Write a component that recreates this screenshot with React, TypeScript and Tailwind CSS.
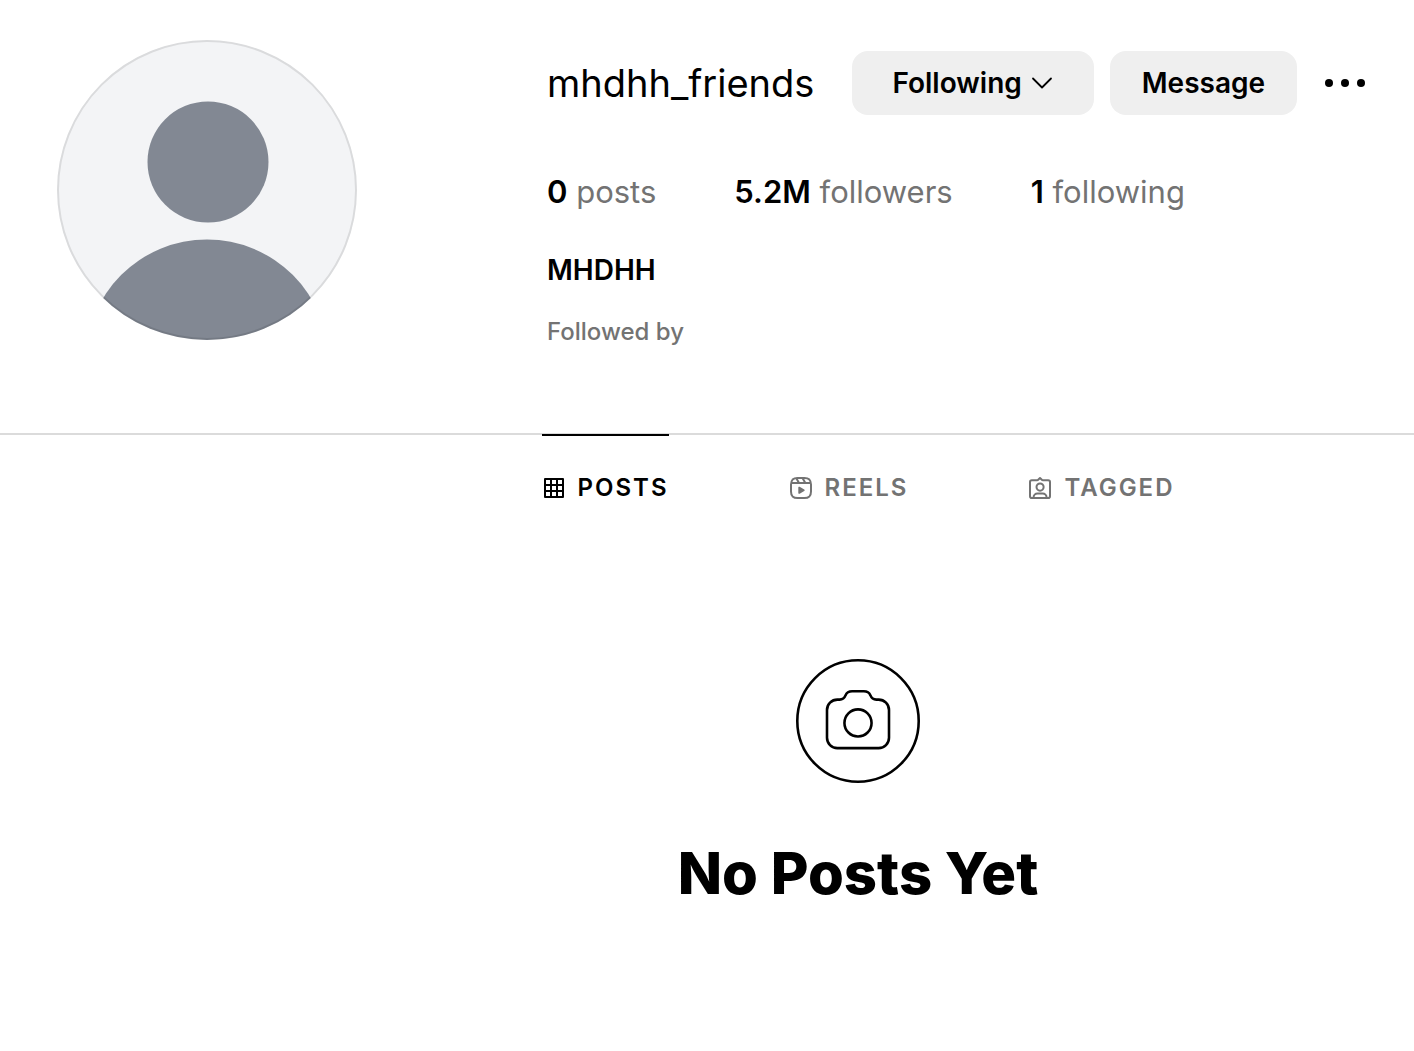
import type { ReactNode } from "react";

interface StatProps {
  value: string;
  label: string;
}

interface TabProps {
  label: string;
  icon: ReactNode;
  active?: boolean;
}

function Avatar() {
  return (
    <svg viewBox="0 0 300 300" className="size-[300px] shrink-0" role="img" aria-label="Profile picture">
      <clipPath id="avatar-clip">
        <circle cx="150" cy="150" r="150" />
      </clipPath>
      <g clipPath="url(#avatar-clip)">
        <rect width="300" height="300" fill="#f3f4f6" />
        <circle cx="151" cy="122" r="60.5" fill="#828893" />
        <circle cx="150" cy="321" r="121.5" fill="#828893" />
      </g>
      <circle cx="150" cy="150" r="149" fill="none" stroke="#000" strokeOpacity="0.1" strokeWidth="2" />
    </svg>
  );
}

function GridIcon() {
  return (
    <svg viewBox="0 0 24 24" className="size-6" fill="none" stroke="currentColor" strokeWidth="2" strokeLinejoin="round" aria-hidden="true">
      <rect x="3" y="3" width="18" height="18" />
      <path d="M9 3v18M15 3v18M3 9h18M3 15h18" />
    </svg>
  );
}

function ReelsIcon() {
  return (
    <svg viewBox="0 0 24 24" className="size-6" fill="none" stroke="currentColor" strokeWidth="2" strokeLinejoin="round" aria-hidden="true">
      <path d="M2.05 7h19.9M13.5 2l2.86 5M7.2 2.1 10 7" />
      <path
        strokeLinecap="round"
        d="M2 12v3.45c0 2.85.7 4 1.6 4.95.95.9 2.1 1.6 4.95 1.6h6.9c2.85 0 4-.7 4.95-1.6.9-.95 1.6-2.1 1.6-4.95v-6.9c0-2.85-.7-4-1.6-4.95C19.45 2.7 18.3 2 15.45 2h-6.9C5.7 2 4.55 2.7 3.6 3.6 2.7 4.55 2 5.7 2 8.55Z"
      />
      <path
        fill="currentColor"
        stroke="none"
        d="M9.76 17.66a.9.9 0 0 1-.45-.78v-5.25a.9.9 0 0 1 1.36-.79l4.55 2.63a.9.9 0 0 1 0 1.57l-4.55 2.62a.9.9 0 0 1-.91 0Z"
      />
    </svg>
  );
}

function TaggedIcon() {
  return (
    <svg viewBox="0 0 24 24" className="size-6" fill="none" stroke="currentColor" strokeWidth="2" strokeLinecap="round" strokeLinejoin="round" aria-hidden="true">
      <path d="M10.2 3.8 12 2l1.8 1.8a1.6 1.6 0 0 0 1.12.46h5.26A1.82 1.82 0 0 1 22 6.08v14.1A1.82 1.82 0 0 1 20.18 22H3.82A1.82 1.82 0 0 1 2 20.18V6.08a1.82 1.82 0 0 1 1.82-1.82h5.26a1.6 1.6 0 0 0 1.12-.46Z" />
      <path d="M18.6 22v-.6a3.95 3.95 0 0 0-3.95-3.95H9.5a3.95 3.95 0 0 0-3.95 3.95v.6" />
      <circle cx="12.07" cy="11.07" r="3.56" />
    </svg>
  );
}

function CameraIcon() {
  return (
    <svg viewBox="0 0 96 96" className="size-[124px]" fill="none" stroke="currentColor" strokeWidth="2" strokeLinejoin="round" aria-hidden="true">
      <circle cx="48" cy="48" r="47" />
      <circle cx="48" cy="49.5" r="10.5" />
      <path d="M64 69a8 8 0 0 0 8-8.03V39.46a8.02 8.02 0 0 0-8.01-8.04h-1.75a4.95 4.95 0 0 1-4.59-3.24C56.61 25.7 54.86 25 52.47 25h-8.98c-2.4 0-4.15.7-5.19 3.18a4.95 4.95 0 0 1-4.59 3.24h-1.7A8.02 8.02 0 0 0 24 39.46v21.5A8.02 8.02 0 0 0 32 69Z" />
    </svg>
  );
}

function Stat({ value, label }: StatProps) {
  return (
    <li className="text-[#737373]">
      <span className="font-semibold text-black">{value}</span> {label}
    </li>
  );
}

function Tab({ label, icon, active }: TabProps) {
  return (
    <a
      href="#"
      aria-current={active ? "page" : undefined}
      className={`-mt-px flex h-[106px] items-center gap-3 border-t-2 text-2xl font-semibold tracking-[2px] ${
        active ? "border-black text-black" : "border-transparent text-[#737373]"
      }`}
    >
      {icon}
      {label}
    </a>
  );
}

export default function App() {
  return (
    <main className="min-h-screen overflow-x-hidden bg-white font-['Inter','Liberation_Sans',sans-serif] text-black">
      <header className="flex gap-[190px] pt-10 pr-10 pb-[85px] pl-[57px]">
        <Avatar />
        <section className="pt-[11px] whitespace-nowrap">
          <div className="flex items-center">
            <h1 className="mr-[38px] text-[38px]">mhdhh_friends</h1>
            <div className="flex items-center gap-4">
              <button type="button" className="flex h-16 items-center gap-2 rounded-2xl bg-[#efefef] px-10 text-[28px] font-semibold">
                Following
                <svg viewBox="0 0 24 24" className="size-6" fill="none" stroke="currentColor" strokeWidth="1.8" strokeLinecap="round" strokeLinejoin="round" aria-hidden="true">
                  <path d="m3 7.5 9 9 9-9" />
                </svg>
              </button>
              <button type="button" className="h-16 rounded-2xl bg-[#efefef] px-8 text-[28px] font-semibold">
                Message
              </button>
              <button type="button" aria-label="Options">
                <svg viewBox="0 0 24 24" className="size-16" fill="currentColor" aria-hidden="true">
                  <circle cx="6" cy="12" r="1.5" />
                  <circle cx="12" cy="12" r="1.5" />
                  <circle cx="18" cy="12" r="1.5" />
                </svg>
              </button>
            </div>
          </div>
          <ul className="mt-[57px] flex gap-[78px] text-[31px] leading-10">
            <Stat value="0" label="posts" />
            <Stat value="5.2M" label="followers" />
            <Stat value="1" label="following" />
          </ul>
          <h2 className="mt-10 text-[28px] leading-9 font-semibold">MHDHH</h2>
          <p className="mt-7 text-2xl leading-8 font-medium text-[#737373]">Followed by</p>
        </section>
      </header>

      <nav className="flex justify-center gap-[120px] border-t-2 border-[#dbdbdb] pl-[302px]">
        <Tab label="POSTS" icon={<GridIcon />} active />
        <Tab label="REELS" icon={<ReelsIcon />} />
        <Tab label="TAGGED" icon={<TaggedIcon />} />
      </nav>

      <section className="flex flex-col items-center pt-[119px] pl-[302px]">
        <CameraIcon />
        <h2 className="mt-[54px] text-[58px] leading-[72px] font-extrabold">No Posts Yet</h2>
      </section>
    </main>
  );
}
